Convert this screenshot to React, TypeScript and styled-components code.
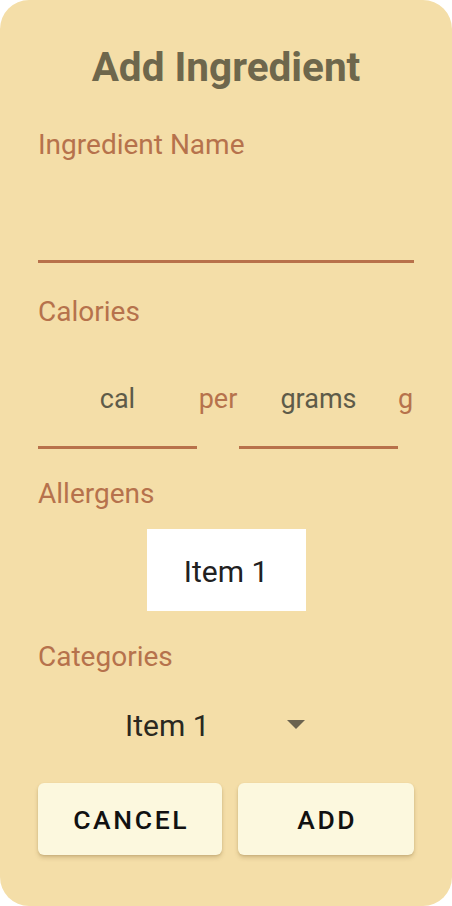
import React from "react";
import styled, { createGlobalStyle } from "styled-components";

const Global = createGlobalStyle`
  html, body { margin: 0; padding: 0; background: #ffffff; }
  body { font-family: Roboto, "Noto Sans", "Liberation Sans", sans-serif; }
  * { box-sizing: border-box; }
`;

const Card = styled.div`
  width: 452px;
  height: 906px;
  background: #f4dea8;
  border-radius: 29px;
  padding: 43px 38px 0;
  display: flex;
  flex-direction: column;
`;

const Title = styled.h1`
  margin: 0;
  font-size: 40.5px;
  line-height: 48px;
  font-weight: 700;
  color: #6e674c;
  text-align: center;
`;

const Label = styled.div<{ $mt: number }>`
  margin-top: ${(p) => p.$mt}px;
  font-size: 28px;
  line-height: 32px;
  color: #b6724c;
`;

const TextField = styled.div`
  height: 102px;
  border-bottom: 3px solid #b8714a;
`;

const CalRow = styled.div`
  display: grid;
  grid-template-columns: 159px 42px 159px 1fr;
  height: 120.7px;
`;

const NumField = styled.div`
  display: flex;
  align-items: flex-end;
  justify-content: center;
  padding-bottom: 31px;
  border-bottom: 3px solid #b8714a;
  font-size: 27px;
  line-height: 32px;
  color: #5e5b49;
`;

const Suffix = styled.div<{ $align: string }>`
  display: flex;
  align-items: flex-end;
  justify-content: ${(p) => p.$align};
  padding-bottom: 34px;
  font-size: 27px;
  line-height: 32px;
  color: #b6724c;
`;

const ChipBox = styled.div`
  align-self: center;
  margin-top: 19.4px;
  width: 159px;
  height: 82px;
  padding-top: 4px;
  background: #ffffff;
  text-align: center;
  font-size: 30px;
  line-height: 78px;
  color: #212121;
`;

const Spinner = styled.div`
  margin-top: 33.2px;
  margin-left: 87px;
  width: 180px;
  height: 40px;
  display: flex;
  align-items: center;
  justify-content: space-between;
`;

const SpinnerText = styled.span`
  font-size: 30px;
  line-height: 40px;
  color: #2a2820;
`;

const Arrow = styled.span`
  width: 0;
  height: 0;
  border-left: 9px solid transparent;
  border-right: 9px solid transparent;
  border-top: 9px solid #6b634f;
  margin-top: -2px;
`;

const ButtonRow = styled.div`
  margin-top: 37.25px;
  display: flex;
  gap: 16px;
`;

const Button = styled.button<{ $grow: number }>`
  flex: ${(p) => p.$grow} 1 0;
  height: 72px;
  border: none;
  border-radius: 6px;
  background: #fcf8de;
  box-shadow: 0 3px 4px rgba(120, 90, 40, 0.22), 0 1px 2px rgba(120, 90, 40, 0.18);
  font-family: Roboto, "Noto Sans", "Liberation Sans", sans-serif;
  font-size: 26.5px;
  font-weight: 500;
  letter-spacing: 0.1em;
  color: #111111;
  text-transform: uppercase;
  padding: 0 0 0 0.1em;
  cursor: pointer;
`;

export default function App() {
  return (
    <>
      <Global />
      <Card>
        <Title>Add Ingredient</Title>
        <Label $mt={38}>Ingredient Name</Label>
        <TextField />
        <Label $mt={33.3}>Calories</Label>
        <CalRow>
          <NumField>cal</NumField>
          <Suffix $align="center">per</Suffix>
          <NumField>grams</NumField>
          <Suffix $align="flex-start">g</Suffix>
        </CalRow>
        <Label $mt={28.6}>Allergens</Label>
        <ChipBox>Item 1</ChipBox>
        <Label $mt={29.6}>Categories</Label>
        <Spinner>
          <SpinnerText>Item 1</SpinnerText>
          <Arrow />
        </Spinner>
        <ButtonRow>
          <Button $grow={183.4}>Cancel</Button>
          <Button $grow={175.6}>Add</Button>
        </ButtonRow>
      </Card>
    </>
  );
}
